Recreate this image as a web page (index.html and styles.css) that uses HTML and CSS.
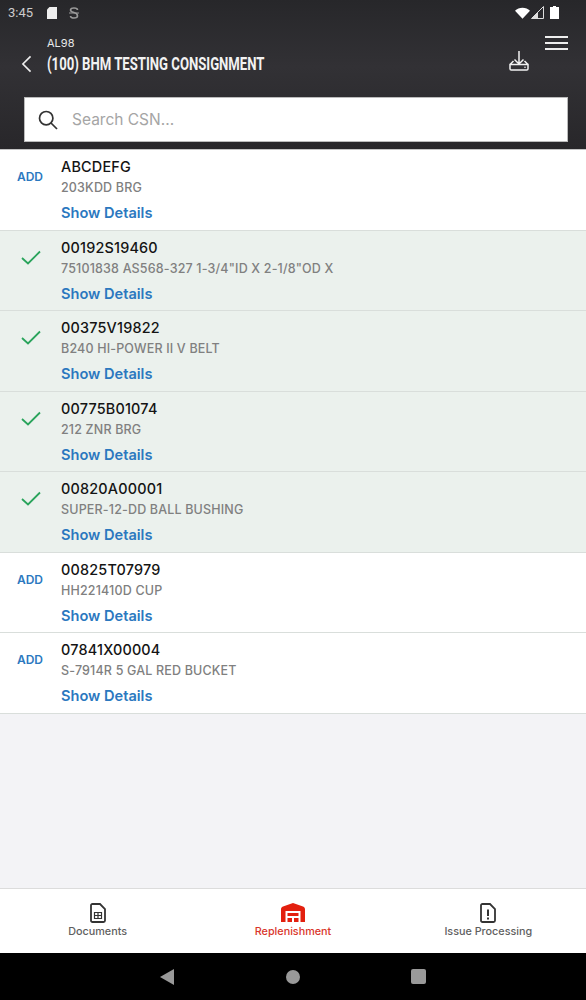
FILE: index.html
```html
<!DOCTYPE html>
<html lang="en">
<head>
<meta charset="utf-8">
<title>Replenishment</title>
<link rel="stylesheet" href="styles.css">
</head>
<body>
<div class="app">
  <header class="top">
    <div class="status">
      <span class="time">3:45</span>
      <svg class="st-sd" viewBox="0 0 10 12"><path d="M2.500 0H10v12H0V2.500z" fill="#eee"/></svg>
      <svg class="st-s" viewBox="0 0 10 12" fill="none" stroke="#999" stroke-width="1.600"><path d="M8.500 3C8.500 1.500 7 1 5 1S1.500 1.600 1.500 3 3 5 5 5.500 8.500 7 8.500 9 7 11 5 11 1.500 10.500 1.500 9"/><path d="M0 6h10" stroke-width="1"/></svg>
      <span class="st-gap"></span>
      <svg class="st-wifi" viewBox="0 0 16 12"><path d="M0 3.500C4-.8 12-.8 16 3.500L8 12z" fill="#fff"/></svg>
      <svg class="st-signal" viewBox="0 0 13 13"><path d="M12.500.5v12H.5z" fill="none" stroke="#ddd"/><path d="M7 6v6.500H.5z" fill="#ddd"/></svg>
      <svg class="st-bat" viewBox="0 0 9 13"><path d="M3 0h3v1h3v12H0V1h3z" fill="#fff"/></svg>
    </div>
    <div class="bar">
      <svg class="back" viewBox="0 0 12 20" fill="none" stroke="#eee" stroke-width="1.800"><path d="M10.500 1.500 2 10l8.500 8.500"/></svg>
      <div class="titles">
        <div class="sub">AL98</div>
        <div class="title">(100) BHM TESTING CONSIGNMENT</div>
      </div>
      <svg class="dl" viewBox="0 0 20 20" fill="none" stroke="#f2f2f2" stroke-width="1.500"><path d="M10 0v13M5.500 8.500 10 13l4.500-4.500"/><path d="M1 13.500h18v4.200c0 .8-.4 1.300-1.200 1.300H2.200c-.8 0-1.200-.5-1.200-1.300zM1 13.500 4.500 10M19 13.500 15.500 10"/><circle cx="16" cy="16.300" r=".8" fill="#f2f2f2" stroke="none"/></svg>
      <div class="menu"><span></span><span></span><span></span></div>
    </div>
    <div class="search">
      <svg class="mag" viewBox="0 0 20 20" fill="none" stroke="#333" stroke-width="1.700"><circle cx="8.200" cy="8.200" r="6.700"/><path d="m13 13 6 6"/></svg>
      <span class="ph">Search CSN...</span>
    </div>
  </header>
  <main class="list">
    <div class="row"><div class="act add">ADD</div><div class="info"><div class="csn">ABCDEFG</div><div class="desc">203KDD BRG</div><div class="more">Show Details</div></div></div>
    <div class="row done"><div class="act"><svg class="check" viewBox="0 0 20 15" fill="none" stroke="#2aa45c" stroke-width="1.800"><path d="m1 8 6 5.500L19 1.500"/></svg></div><div class="info"><div class="csn">00192S19460</div><div class="desc">75101838 AS568-327 1-3/4"ID X 2-1/8"OD X</div><div class="more">Show Details</div></div></div>
    <div class="row done"><div class="act"><svg class="check" viewBox="0 0 20 15" fill="none" stroke="#2aa45c" stroke-width="1.800"><path d="m1 8 6 5.500L19 1.500"/></svg></div><div class="info"><div class="csn">00375V19822</div><div class="desc">B240 HI-POWER II V BELT</div><div class="more">Show Details</div></div></div>
    <div class="row done"><div class="act"><svg class="check" viewBox="0 0 20 15" fill="none" stroke="#2aa45c" stroke-width="1.800"><path d="m1 8 6 5.500L19 1.500"/></svg></div><div class="info"><div class="csn">00775B01074</div><div class="desc">212 ZNR BRG</div><div class="more">Show Details</div></div></div>
    <div class="row done"><div class="act"><svg class="check" viewBox="0 0 20 15" fill="none" stroke="#2aa45c" stroke-width="1.800"><path d="m1 8 6 5.500L19 1.500"/></svg></div><div class="info"><div class="csn">00820A00001</div><div class="desc">SUPER-12-DD BALL BUSHING</div><div class="more">Show Details</div></div></div>
    <div class="row"><div class="act add">ADD</div><div class="info"><div class="csn">00825T07979</div><div class="desc">HH221410D CUP</div><div class="more">Show Details</div></div></div>
    <div class="row"><div class="act add">ADD</div><div class="info"><div class="csn">07841X00004</div><div class="desc">S-7914R 5 GAL RED BUCKET</div><div class="more">Show Details</div></div></div>
  </main>
  <nav class="tabs">
    <div class="tab">
      <svg class="tab-ic" viewBox="0 0 16 20" fill="none" stroke="#333" stroke-width="1.800"><path d="M2.500 1H10l5 5v11.500c0 1-.6 1.500-1.500 1.500h-11C1.600 19 1 18.500 1 17.500v-15C1 1.500 1.600 1 2.500 1z"/><path d="M4.500 9.500h7v6h-7zM4.500 12.500h7M8 9.500v6" stroke-width="1.200"/></svg>
      <span>Documents</span>
    </div>
    <div class="tab on">
      <svg class="tab-ic wh" viewBox="0 0 26 20"><path d="M1 19V6.500C1 5 1.500 4 3 3.500L13 0l10 3.500c1.500.5 2 1.500 2 3V19h-4.500V8h-15v11z" fill="#e3200f"/><path d="M7.500 10h11v3h-11zM7.500 15h4.500v4H7.500zM14 15h4.500v4H14z" fill="#e3200f"/></svg>
      <span>Replenishment</span>
    </div>
    <div class="tab">
      <svg class="tab-ic" viewBox="0 0 16 20" fill="none" stroke="#333" stroke-width="1.800"><path d="M2.500 1H10l5 5v11.500c0 1-.6 1.500-1.500 1.500h-11C1.600 19 1 18.500 1 17.500v-15C1 1.500 1.600 1 2.500 1z"/><path d="M8 6.500v6.500" stroke-width="2"/><path d="M8 14.500v2" stroke-width="2"/></svg>
      <span>Issue Processing</span>
    </div>
  </nav>
  <footer class="sys">
    <svg class="nav-b" viewBox="0 0 14 16"><path d="M14 0v16L0 8z" fill="#999"/></svg>
    <span class="nav-h"></span>
    <span class="nav-r"></span>
  </footer>
</div>
</body>
</html>
```
FILE: styles.css
```css
* { box-sizing: border-box; }
html, body { margin: 0; padding: 0; }
body { font-family: Inter, "Liberation Sans", sans-serif; background: #f3f3f6; }
.app { width: 586px; height: 1000px; display: flex; flex-direction: column; overflow: hidden; }

.top { height: 150px; flex: none; background: linear-gradient(#27272a, #323135 45%, #28272a); display: flex; flex-direction: column; border-bottom: 1px solid #c4c4c4; }
.status { height: 25px; flex: none; display: flex; align-items: center; padding: 0 27px 0 8px; color: #ccc; font: 13px Roboto, sans-serif; }
.time { margin-right: 14px; }
.st-sd { width: 10px; height: 12px; margin-right: 12px; }
.st-s { width: 10px; height: 12px; }
.st-gap { flex: 1; }
.st-wifi { width: 15px; height: 12px; margin-right: 1px; }
.st-signal { width: 13px; height: 13px; margin-right: 6px; }
.st-bat { width: 9px; height: 13px; }

.bar { height: 72px; flex: none; display: flex; align-items: flex-start; padding: 11px 18px 0 21px; }
.back { width: 11px; height: 18px; margin-top: 19px; margin-right: 15px; flex: none; }
.titles { flex: 1; }
.sub { font-size: 11px; line-height: 15px; color: #e8e8e8; }
.title { font: 700 18px/24px Roboto, "Liberation Sans", sans-serif; color: #f2f2f2; transform-origin: left; transform: scaleX(.73); white-space: nowrap; margin-top: 1px; }
.dl { width: 20px; height: 20px; margin-top: 15px; margin-right: 16px; flex: none; }
.menu { width: 23px; flex: none; display: flex; flex-direction: column; gap: 4px; }
.menu span { display: block; height: 2px; background: #eee; }

.search { margin: 0 18px 0 24px; height: 45px; flex: none; background: #fff; border: 1px solid #bbb; display: flex; align-items: center; padding-left: 13px; }
.mag { width: 20px; height: 20px; margin-right: 14px; }
.ph { font-size: 15.500px; color: #a5a5a5; }

.list { flex: 1; }
.row { display: flex; background: #fff; border-bottom: 1px solid #d9dedb; height: 80.500px; }
.row.done { background: #ebf1ed; }
.act { width: 60px; flex: none; display: flex; justify-content: center; align-items: flex-start; padding-top: 20px; }
.add { font-size: 12px; line-height: 14px; font-weight: 600; color: #2b78bf; }
.check { width: 20px; height: 15px; margin: -1px 0 0 2px; }
.info { padding-top: 8px; min-width: 0; margin-left: 1px; }
.csn { font-size: 14.400px; line-height: 18px; font-weight: 500; color: #141414; letter-spacing: .2px; }
.desc { font-size: 12.500px; line-height: 14px; color: #808080; margin-top: 5px; font-weight: 500; letter-spacing: .17px; }
.more { font-size: 14.600px; line-height: 18px; font-weight: 600; color: #2b78bf; margin-top: 9px; }

.tabs { height: 65px; flex: none; background: #fff; border-top: 1px solid #dcdcdc; display: grid; grid-template-columns: repeat(3, 1fr); }
.tab { display: flex; flex-direction: column; align-items: center; padding-top: 14px; font-size: 10.800px; line-height: 13px; font-weight: 500; color: #5f5f5f; }
.tab.on { color: #d9362b; }
.tab-ic { width: 16px; height: 20px; margin-bottom: 2px; }
.tab-ic.wh { width: 26px; }

.sys { height: 47px; flex: none; background: #000; display: grid; grid-template-columns: 160px 14px 112px 15px 110px 16px; align-items: center; }
.nav-b { width: 14px; height: 16px; grid-column: 2; }
.nav-h { width: 14px; height: 14px; border-radius: 50%; background: #999; grid-column: 4; }
.nav-r { width: 15px; height: 15px; border-radius: 2px; background: #999; grid-column: 6; }
```
